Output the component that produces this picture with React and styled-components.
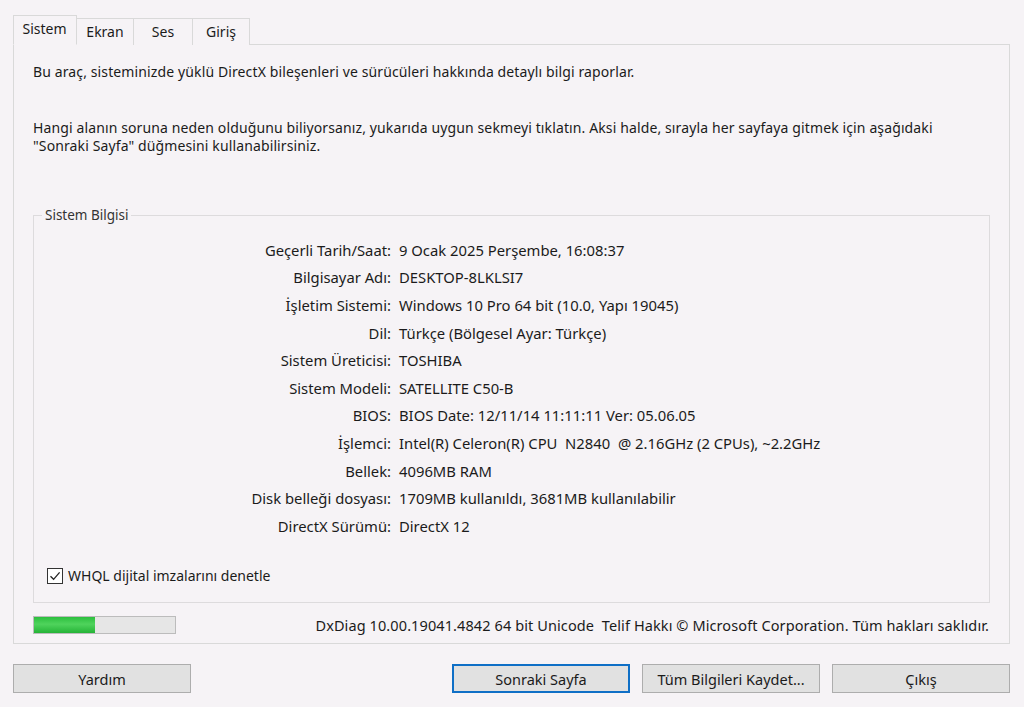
import React from 'react'
import styled, { createGlobalStyle } from 'styled-components'

const GlobalStyle = createGlobalStyle`
  html, body {
    margin: 0;
    padding: 0;
    background: #f6f3f6;
  }
  body {
    font-family: "Noto Sans", "DejaVu Sans", sans-serif;
    font-size: 14px;
    color: #1b1b1b;
  }
`

const rows = [
  ['Geçerli Tarih/Saat:', '9 Ocak 2025 Perşembe, 16:08:37'],
  ['Bilgisayar Adı:', 'DESKTOP-8LKLSI7'],
  ['İşletim Sistemi:', 'Windows 10 Pro 64 bit (10.0, Yapı 19045)'],
  ['Dil:', 'Türkçe (Bölgesel Ayar: Türkçe)'],
  ['Sistem Üreticisi:', 'TOSHIBA'],
  ['Sistem Modeli:', 'SATELLITE C50-B'],
  ['BIOS:', 'BIOS Date: 12/11/14 11:11:11 Ver: 05.06.05'],
  ['İşlemci:', 'Intel(R) Celeron(R) CPU  N2840  @ 2.16GHz (2 CPUs), ~2.2GHz'],
  ['Bellek:', '4096MB RAM'],
  ['Disk belleği dosyası:', '1709MB kullanıldı, 3681MB kullanılabilir'],
  ['DirectX Sürümü:', 'DirectX 12'],
]

const tabs = ['Sistem', 'Ekran', 'Ses', 'Giriş']

const App = () => {
  return (
    <Window>
      <GlobalStyle />
      <TabStrip>
        {tabs.map((t, i) => (
          <Tab key={t} active={i === 0}>{t}</Tab>
        ))}
      </TabStrip>
      <Panel>
        <Intro>Bu araç, sisteminizde yüklü DirectX bileşenleri ve sürücüleri hakkında detaylı bilgi raporlar.</Intro>
        <Intro second>
          Hangi alanın soruna neden olduğunu biliyorsanız, yukarıda uygun sekmeyi tıklatın. Aksi halde, sırayla her sayfaya gitmek için aşağıdaki<br />
          "Sonraki Sayfa" düğmesini kullanabilirsiniz.
        </Intro>
        <Group>
          <Legend>Sistem Bilgisi</Legend>
          <InfoGrid>
            {rows.map(([k, v]) => (
              <React.Fragment key={k}>
                <Label>{k}</Label>
                <Value>{v}</Value>
              </React.Fragment>
            ))}
          </InfoGrid>
          <CheckRow>
            <CheckBox>
              <svg width="12" height="12" viewBox="0 0 12 12">
                <path d="M1.5 6.2 L4.6 9.3 L10.6 2.3" fill="none" stroke="#222" strokeWidth="1.3" />
              </svg>
            </CheckBox>
            WHQL dijital imzalarını denetle
          </CheckRow>
        </Group>
        <StatusRow>
          <Progress>
            <ProgressFill style={{ width: '43%' }} />
          </Progress>
          <Copyright>DxDiag 10.00.19041.4842 64 bit Unicode  Telif Hakkı © Microsoft Corporation. Tüm hakları saklıdır.</Copyright>
        </StatusRow>
      </Panel>
      <ButtonBar>
        <Button>Yardım</Button>
        <Spacer />
        <Button focused>Sonraki Sayfa</Button>
        <Button>Tüm Bilgileri Kaydet...</Button>
        <Button>Çıkış</Button>
      </ButtonBar>
    </Window>
  )
}

export default App

const Window = styled.div`
  width: 1024px;
  height: 707px;
  box-sizing: border-box;
  padding: 15px 14px 0 13px;
`
const TabStrip = styled.div`
  display: flex;
  align-items: flex-end;
  height: 30px;
  position: relative;
  z-index: 1;
`
const Tab = styled.div`
  box-sizing: border-box;
  height: ${p => (p.active ? '30px' : '27px')};
  padding: ${p => (p.active ? '3px 9px 0 8px' : '3px 0 0 0')};
  width: ${p => (p.active ? '64px' : 'auto')};
  min-width: 57px;
  text-align: center;
  border: 1px solid #d9d9d9;
  border-bottom: ${p => (p.active ? '1px solid #f6f3f6' : 'none')};
  border-left: ${p => (p.active ? '1px solid #d9d9d9' : 'none')};
  background: #f6f3f6;
  font-size: 14px;
  line-height: 20px;
  &:nth-child(2) { width: 57px; }
  &:nth-child(3) { width: 59px; }
  &:nth-child(4) { width: 57px; }
`
const Panel = styled.div`
  box-sizing: border-box;
  height: 600px;
  margin-top: -1px;
  border: 1px solid #d9d9d9;
  padding: 18px 19px 0 19px;
`
const Intro = styled.p`
  margin: ${p => (p.second ? '38px 0 0 0' : '0')};
  line-height: 18px;
  font-size: 14px;
  letter-spacing: 0.12px;
`
const Group = styled.fieldset`
  box-sizing: border-box;
  height: 397px;
  margin: 51px 0 0 0;
  padding: 12px 0 0 0;
  border: 1px solid #dddbdd;
`
const Legend = styled.legend`
  margin-left: 8px;
  padding: 0 3px;
  line-height: 18px;
  font-size: 13.5px;
  color: #333;
`
const InfoGrid = styled.div`
  display: grid;
  grid-template-columns: 357px 1fr;
  column-gap: 8px;
  grid-auto-rows: 27.6px;
  align-items: center;
  font-size: 14.8px;
`
const Label = styled.div`
  text-align: right;
  white-space: nowrap;
`
const Value = styled.div`
  white-space: pre;
`
const CheckRow = styled.div`
  display: flex;
  align-items: center;
  gap: 5px;
  margin: 27px 0 0 13px;
  line-height: 18px;
  font-size: 14px;
`
const CheckBox = styled.span`
  box-sizing: border-box;
  width: 16px;
  height: 16px;
  border: 1px solid #333;
  background: #fff;
  display: flex;
  align-items: center;
  justify-content: center;
`
const StatusRow = styled.div`
  display: flex;
  align-items: center;
  justify-content: space-between;
  margin-top: 12px;
  padding-right: 1px;
`
const Progress = styled.div`
  box-sizing: border-box;
  width: 143px;
  height: 18px;
  border: 1px solid #bcbcbc;
  background: #e6e6e6;
`
const ProgressFill = styled.div`
  height: 100%;
  background: linear-gradient(180deg, #2cbf3e 0%, #4fd35c 45%, #25b437 100%);
`
const Copyright = styled.div`
  font-size: 14.5px;
  letter-spacing: 0.1px;
  white-space: pre;
`
const ButtonBar = styled.div`
  display: flex;
  gap: 12px;
  margin-top: 20px;
`
const Spacer = styled.div`
  flex: 1;
`
const Button = styled.button`
  box-sizing: border-box;
  width: 178px;
  height: 29px;
  font-family: "Noto Sans", "DejaVu Sans", sans-serif;
  font-size: 14.5px;
  color: #1b1b1b;
  background: #e1e1e1;
  border: ${p => (p.focused ? '2px solid #0f6fc6' : '1px solid #adadad')};
  padding: 0;
`
